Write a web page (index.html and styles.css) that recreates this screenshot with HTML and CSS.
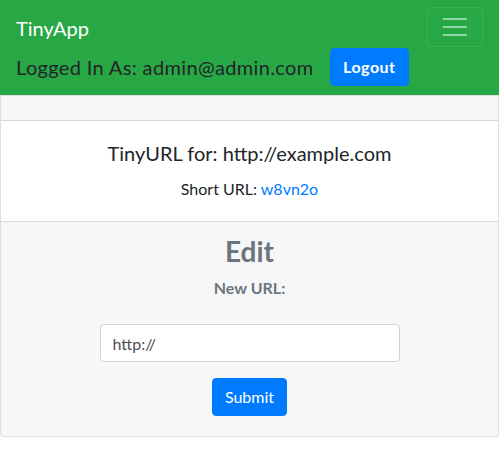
FILE: index.html
```html
<!DOCTYPE html>
<html>
<head>
<meta charset="utf-8">
<link rel="stylesheet" href="styles.css">
</head>
<body>
<nav class="navbar">
  <div class="nav-row">
    <a class="brand" href="#">TinyApp</a>
    <button class="toggler" type="button" aria-label="Toggle navigation">
      <svg width="30" height="30" viewBox="0 0 30 30"><path stroke="rgba(255,255,255,0.5)" stroke-width="2" stroke-linecap="butt" d="M3 7h24M3 15h24M3 23h24"/></svg>
    </button>
  </div>
  <div class="nav-user">
    <span class="nav-text">Logged In As: admin@admin.com</span>
    <button class="btn btn-primary btn-bold" type="button">Logout</button>
  </div>
</nav>
<main class="card">
  <div class="card-header"></div>
  <div class="card-body">
    <h5 class="card-title">TinyURL for: http://example.com</h5>
    <p class="card-text">Short URL: <a href="#">w8vn2o</a></p>
  </div>
  <div class="card-footer">
    <h3 class="edit-title">Edit</h3>
    <form class="edit-form">
      <label class="label" for="longURL">New URL:</label>
      <input class="input" id="longURL" type="text" value="http://">
      <button class="btn btn-primary" type="submit">Submit</button>
    </form>
  </div>
</main>
</body>
</html>
```

FILE: styles.css
```css
* { box-sizing: border-box; }
html, body { margin: 0; padding: 0; }
body {
  font-family: "Lato", "Open Sans", sans-serif;
  font-size: 16px;
  line-height: 1.5;
  color: #212529;
  background: #fff;
}
.navbar {
  background: #28a745;
  padding: 7px 16px 9px;
  display: flex;
  flex-direction: column;
}
.nav-row {
  display: flex;
  justify-content: space-between;
  align-items: flex-start;
}
.brand {
  color: #fff;
  text-decoration: none;
  font-size: 20px;
  line-height: 30px;
  padding: 6px 0 5px;
}
.toggler {
  width: 56px;
  height: 40px;
  padding: 4px 12px;
  background: transparent;
  border: 1px solid rgba(255,255,255,0.1);
  border-radius: 4px;
  display: flex;
  align-items: center;
  justify-content: center;
}
.toggler svg { display: block; }
.nav-user {
  display: flex;
  align-items: center;
  gap: 16px;
}
.nav-text {
  font-size: 20px;
  line-height: 30px;
  letter-spacing: 0.35px;
  color: #212529;
}
.btn {
  display: inline-block;
  font-family: inherit;
  font-size: 16px;
  line-height: 24px;
  padding: 6px 12px;
  border: 1px solid transparent;
  border-radius: 4px;
  cursor: pointer;
}
.btn-primary { background: #007bff; border-color: #007bff; color: #fff; }
.btn-bold { font-weight: 700; letter-spacing: 0.5px; padding: 6px 12px 6px 12.5px; }
.card {
  display: block;
  border: 1px solid rgba(0,0,0,0.125);
  border-radius: 4px;
  border-top-left-radius: 0;
  border-top-right-radius: 0;
  background: #fff;
}
.card-header {
  height: 25px;
  background: rgba(0,0,0,0.03);
  border-bottom: 1px solid rgba(0,0,0,0.125);
}
.card-body {
  padding: 20px;
  text-align: center;
}
.card-title {
  margin: 0 0 12px;
  font-size: 20px;
  line-height: 24px;
  font-weight: 400;
}
.card-text { margin: 0; }
.card-text a { color: #007bff; text-decoration: none; }
.card-footer {
  background: rgba(0,0,0,0.03);
  border-top: 1px solid rgba(0,0,0,0.125);
  padding: 12px 20px 20px;
  text-align: center;
  color: #6c757d;
}
.edit-title {
  margin: 0 0 8px;
  font-size: 28px;
  line-height: 34px;
  font-weight: 700;
}
.edit-form {
  display: flex;
  flex-direction: column;
  align-items: center;
}
.label {
  font-weight: 700;
  margin-bottom: 24px;
}
.input {
  width: 300px;
  height: 38px;
  padding: 6px 12px;
  font-family: inherit;
  font-size: 16px;
  color: #495057;
  background: #fff;
  border: 1px solid #ced4da;
  border-radius: 4px;
  margin-bottom: 16px;
}
```
